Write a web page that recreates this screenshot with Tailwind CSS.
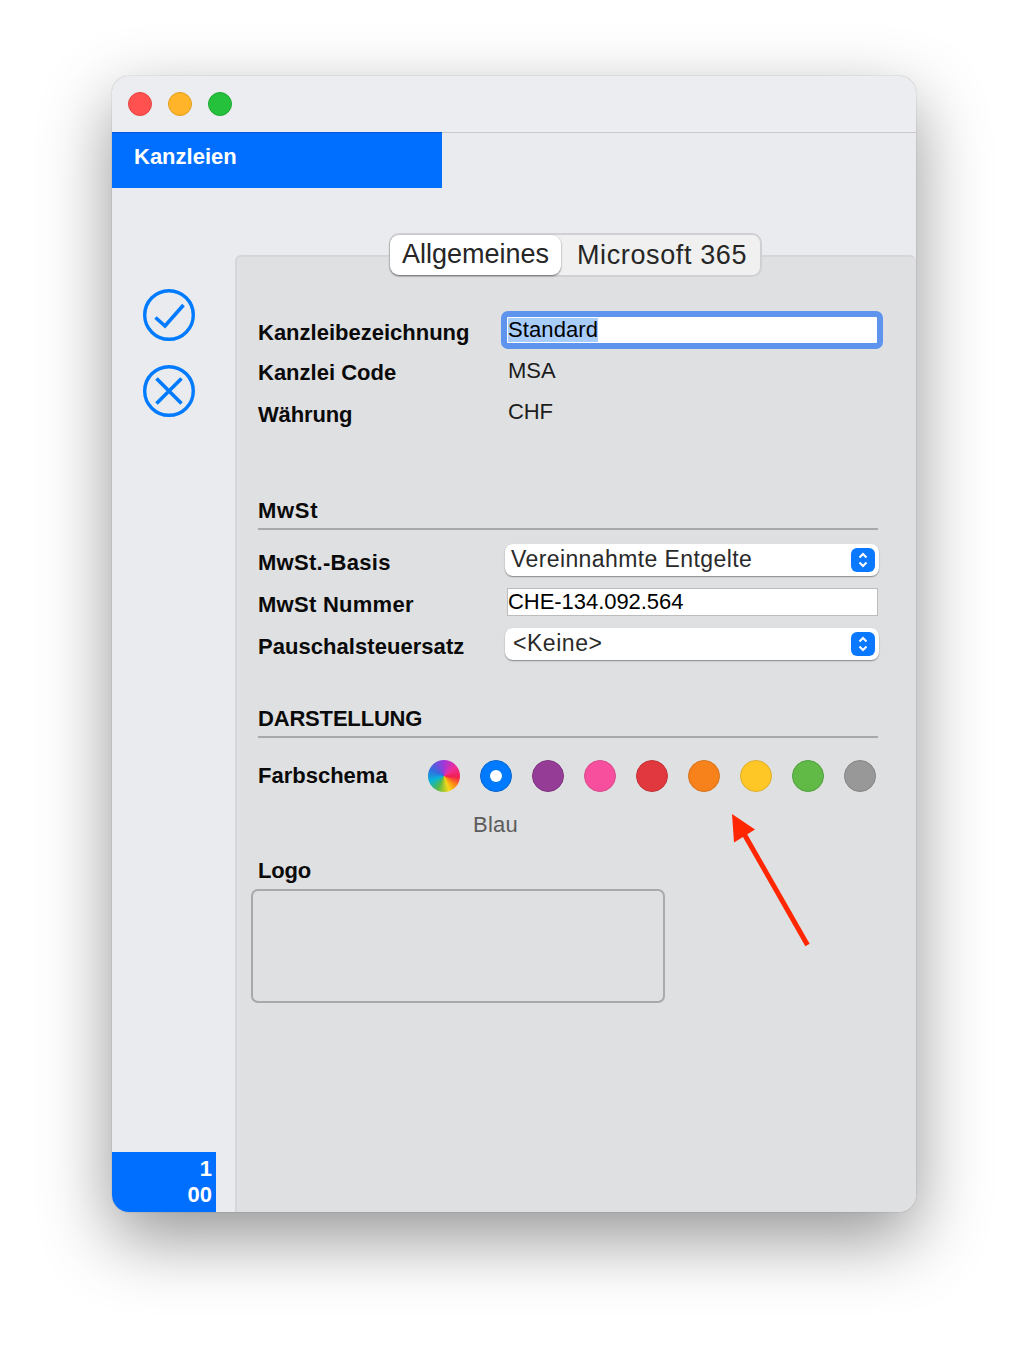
<!doctype html>
<html lang="de"><head><meta charset="utf-8"><title>Kanzleien</title>
<script src="https://cdn.jsdelivr.net/npm/@tailwindcss/browser@4"></script></head>
<body class="bg-white">
<div class="w-[1028px] h-[1360px] pt-[76px] pl-[112px] overflow-hidden font-['Liberation_Sans',Arial,sans-serif]">
 <div class="relative w-[804px] h-[1136px] rounded-[17px] bg-[#e9ebef] shadow-[0_0_1px_rgba(0,0,0,.5),0_26px_70px_rgba(0,0,0,.42)] overflow-hidden flex flex-col">
  <div class="h-[57px] shrink-0 bg-[#ebedf1] border-b border-[#c9c9c9] flex items-center gap-4 pl-4 pb-[1px]">
   <span class="w-6 h-6 rounded-full bg-[#ff5150] border border-[#e2463f]"></span>
   <span class="w-6 h-6 rounded-full bg-[#ffb429] border border-[#e09e20]"></span>
   <span class="w-6 h-6 rounded-full bg-[#26c13c] border border-[#20a832]"></span>
  </div>
  <div class="-mt-px w-[330px] h-[56px] shrink-0 bg-[#006fff] border-t border-[#0058d8] pl-[22px] pt-[9px] text-white font-bold text-[22px] leading-[30px]">Kanzleien</div>
  <div class="flex flex-1 min-h-0">
   <div class="w-[123px] shrink-0 flex flex-col pl-[31px] pt-[101px]">
    <svg class="w-[52px] h-[52px] text-[#007aff]" viewBox="0 0 52 52" fill="none" stroke="currentColor" stroke-width="3.4"><circle cx="26" cy="26" r="24.3"/><path d="M12.5 28.5 22 37 40.5 16" stroke-width="3.6"/></svg>
    <svg class="w-[52px] h-[52px] mt-6 text-[#007aff]" viewBox="0 0 52 52" fill="none" stroke="currentColor" stroke-width="3.4"><circle cx="26" cy="26" r="24.3"/><path d="M13.5 13.5 38.5 38.5M38.5 13.5 13.5 38.5" stroke-width="3.6"/></svg>
    <div class="mt-auto -ml-[31px] w-[104px] h-[60px] bg-[#006fff] text-white text-right font-bold text-[22px] leading-[26px] pr-1 pt-1">1<br>00</div>
   </div>
   <div class="relative flex-1 mt-[67px] bg-[#dfe0e2] border-l-2 border-t-2 border-[#d5d6d9] rounded-t-[6px] pl-[21px]">
    <div class="-mt-[24px] ml-[131px] w-[373px] h-[44px] bg-[#f0f0f0] border-2 border-[#d0d0d3] rounded-[10px] flex items-center text-[27px] text-[#262626]">
     <div class="-ml-px w-[171px] h-[40px] shrink-0 bg-white rounded-[9px] shadow-[0_1px_2px_rgba(0,0,0,.5)] pl-[12px] leading-[39px] tracking-[-0.02px]">Allgemeines</div>
     <div class="pl-[16px] leading-[40px] tracking-[0.62px]">Microsoft 365</div>
    </div>
    <div class="w-[620px] text-[22px] leading-[30px] text-[#0a0a0a]">
     <div class="mt-[34px] h-[38px] flex items-center">
      <div class="w-[243px] shrink-0 pt-[6px] font-bold">Kanzleibezeichnung</div>
      <div class="w-[382px] h-[38px] shrink-0 bg-white border-[6px] border-[#5f94ee] rounded-[7px] flex items-center pl-[1px]"><span class="bg-[#a9cdfb] leading-[24px] text-black tracking-[0.1px]">Standard</span></div>
     </div>
     <div class="mt-[2px] h-10 flex items-center">
      <div class="w-[250px] shrink-0 pt-1 font-bold">Kanzlei Code</div><div class="text-[#1c1c1c]">MSA</div>
     </div>
     <div class="mt-[2px] h-10 flex items-center">
      <div class="w-[250px] shrink-0 pt-1 font-bold tracking-[-0.15px]">Währung</div><div class="pb-[2px] text-[#1c1c1c] tracking-[-0.1px]">CHF</div>
     </div>
     <div class="mt-[62px] h-[35px] pt-px border-b-2 border-[#a9a9ab] font-bold tracking-[0.7px]">MwSt</div>
     <div class="mt-[14px] h-8 flex items-center">
      <div class="w-[247px] shrink-0 pt-[6px] font-bold tracking-[0.28px]">MwSt.-Basis</div>
      <div class="w-[374px] h-8 shrink-0 bg-white rounded-[8px] shadow-[0_1px_1.5px_rgba(0,0,0,.4)] flex items-center justify-between pl-[6px] pr-1 text-[23px] text-[#2a2a2a]">
       <span class="tracking-[0.4px] -mt-[2px]">Vereinnahmte Entgelte</span>
       <span class="w-6 h-6 rounded-[6px] bg-[#0a78ff] flex items-center justify-center"><svg class="w-[14px] h-[18px]" viewBox="0 0 14 18" fill="none" stroke="#fff" stroke-width="2"><path d="M3.5 6.5 7 3l3.5 3.5M3.5 11.5 7 15l3.5-3.5"/></svg></span>
      </div>
     </div>
     <div class="mt-3 h-7 flex items-center">
      <div class="w-[249px] shrink-0 pt-[6px] font-bold tracking-[0.27px]">MwSt Nummer</div>
      <div class="w-[371px] h-7 shrink-0 bg-white border border-[#bcbcbc] leading-[26px] text-black tracking-[-0.05px]">CHE-134.092.564</div>
     </div>
     <div class="mt-3 h-8 flex items-center">
      <div class="w-[247px] shrink-0 pt-[6px] font-bold tracking-[0.05px]">Pauschalsteuersatz</div>
      <div class="w-[374px] h-8 shrink-0 bg-white rounded-[8px] shadow-[0_1px_1.5px_rgba(0,0,0,.4)] flex items-center justify-between pl-2 pr-1 text-[23px] text-[#2a2a2a]">
       <span class="tracking-[0.55px] -mt-[2px]">&lt;Keine&gt;</span>
       <span class="w-6 h-6 rounded-[6px] bg-[#0a78ff] flex items-center justify-center"><svg class="w-[14px] h-[18px]" viewBox="0 0 14 18" fill="none" stroke="#fff" stroke-width="2"><path d="M3.5 6.5 7 3l3.5 3.5M3.5 11.5 7 15l3.5-3.5"/></svg></span>
      </div>
     </div>
     <div class="mt-[43px] h-[35px] pt-px border-b-2 border-[#a9a9ab] font-bold tracking-[-0.18px]">DARSTELLUNG</div>
     <div class="mt-[22px] h-8 flex items-center">
      <div class="w-[170px] shrink-0 font-bold">Farbschema</div>
      <div class="flex gap-5">
       <span class="w-8 h-8 rounded-full bg-[conic-gradient(#a236d8_0deg,#ee2f9b_50deg,#f2204f_95deg,#fb8c14_130deg,#f5d81a_160deg,#58b947_205deg,#08b5d8_250deg,#2f6fe0_295deg,#a236d8_360deg)]"></span>
       <span class="w-8 h-8 rounded-full bg-[#007aff] border border-[#0a66d0] flex items-center justify-center"><span class="w-3 h-3 rounded-full bg-white"></span></span>
       <span class="w-8 h-8 rounded-full bg-[#953d96] border border-[#7e3480]"></span>
       <span class="w-8 h-8 rounded-full bg-[#f74f9e] border border-[#d84b8a]"></span>
       <span class="w-8 h-8 rounded-full bg-[#e0383e] border border-[#c2343a]"></span>
       <span class="w-8 h-8 rounded-full bg-[#f7821b] border border-[#d6741e]"></span>
       <span class="w-8 h-8 rounded-full bg-[#ffc726] border border-[#dfae2c]"></span>
       <span class="w-8 h-8 rounded-full bg-[#62ba46] border border-[#4e9f3d]"></span>
       <span class="w-8 h-8 rounded-full bg-[#989898] border border-[#848484]"></span>
      </div>
     </div>
     <div class="mt-[21px] h-6 pl-[215px] leading-6 text-[#5c5c5c] tracking-[0.25px]">Blau</div>
     <div class="mt-[22px] h-6 leading-6 font-bold tracking-[-0.2px]">Logo</div>
     <div class="mt-[6px] -ml-[7px] w-[414px] h-[114px] border-2 border-[#a9a9ab] rounded-[7px]"></div>
    </div>
    <svg class="absolute left-[494px] top-[557px] w-[80px] h-[135px]" viewBox="0 0 80 135" fill="none"><path d="M76.5 131 12 18" stroke="#ff2600" stroke-width="5"/><path d="M1 0 24 15.5 3 28.5Z" fill="#ff2600"/></svg>
   </div>
  </div>
 </div>
</div>
</body></html>
